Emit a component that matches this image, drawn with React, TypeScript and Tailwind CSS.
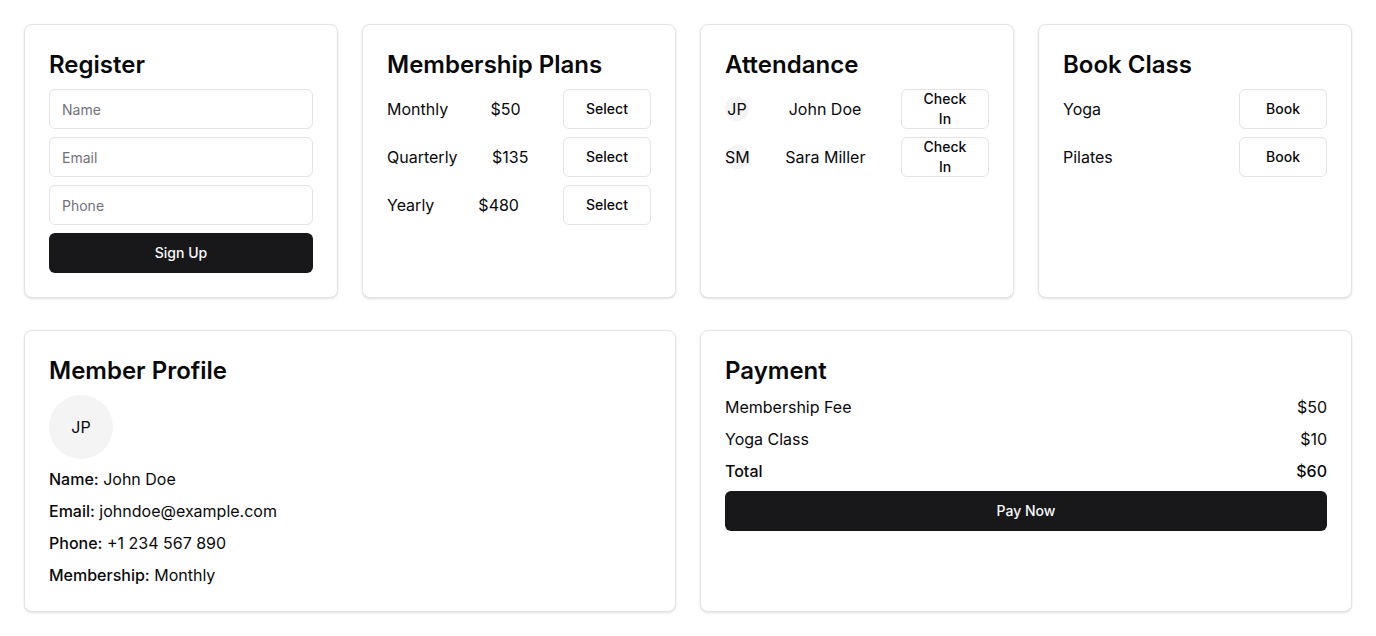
import React from "react";

const plans = [
  { name: "Monthly", price: "$50" },
  { name: "Quarterly", price: "$135" },
  { name: "Yearly", price: "$480" },
];

const members = [
  { initials: "JP", name: "John Doe" },
  { initials: "SM", name: "Sara Miller" },
];

const classes = ["Yoga", "Pilates"];

function Card({ title, className = "", children }: { title: string; className?: string; children: React.ReactNode }) {
  return (
    <div className={`rounded-lg border border-[#e4e4e7] bg-white p-6 shadow-sm ${className}`}>
      <h2 className="mb-2 text-2xl leading-8 font-semibold text-[#09090b]">{title}</h2>
      {children}
    </div>
  );
}

function OutlineButton({ children }: { children: React.ReactNode }) {
  return (
    <button className="flex h-10 w-22 shrink-0 items-center justify-center rounded-md border border-[#e4e4e7] bg-white px-4 text-sm leading-5 font-medium text-[#09090b]">
      {children}
    </button>
  );
}

export default function App() {
  return (
    <div className="min-h-screen bg-white p-6 font-['Inter',sans-serif] text-[#09090b]">
      <div className="grid grid-cols-4 gap-x-6 gap-y-8">
        <Card title="Register">
          <div className="flex flex-col gap-2">
            {["Name", "Email", "Phone"].map((p) => (
              <input
                key={p}
                placeholder={p}
                className="h-10 w-full rounded-md border border-[#e4e4e7] bg-white px-3 text-sm placeholder:text-[#71717a]"
              />
            ))}
            <button className="h-10 w-full rounded-md bg-[#18181b] text-sm font-medium text-[#fafafa]">Sign Up</button>
          </div>
        </Card>

        <Card title="Membership Plans">
          <div className="flex flex-col gap-2">
            {plans.map((p) => (
              <div key={p.name} className="flex items-center justify-between">
                <span>{p.name}</span>
                <span>{p.price}</span>
                <OutlineButton>Select</OutlineButton>
              </div>
            ))}
          </div>
        </Card>

        <Card title="Attendance">
          <div className="flex flex-col gap-2">
            {members.map((m) => (
              <div key={m.name} className="flex items-center justify-between">
                <span className="flex h-6 min-w-6 items-center justify-center rounded-full bg-[#f4f4f5]">{m.initials}</span>
                <span>{m.name}</span>
                <OutlineButton>Check In</OutlineButton>
              </div>
            ))}
          </div>
        </Card>

        <Card title="Book Class">
          <div className="flex flex-col gap-2">
            {classes.map((c) => (
              <div key={c} className="flex items-center justify-between">
                <span>{c}</span>
                <OutlineButton>Book</OutlineButton>
              </div>
            ))}
          </div>
        </Card>

        <Card title="Member Profile" className="col-span-2">
          <div className="flex flex-col gap-2">
            <div className="flex h-16 w-16 items-center justify-center rounded-full bg-[#f4f4f5]">JP</div>
            <p><span className="font-medium">Name:</span> John Doe</p>
            <p><span className="font-medium">Email:</span> johndoe@example.com</p>
            <p><span className="font-medium">Phone:</span> +1 234 567 890</p>
            <p><span className="font-medium">Membership:</span> Monthly</p>
          </div>
        </Card>

        <Card title="Payment" className="col-span-2">
          <div className="flex flex-col gap-2">
            <div className="flex justify-between">
              <span>Membership Fee</span>
              <span>$50</span>
            </div>
            <div className="flex justify-between">
              <span>Yoga Class</span>
              <span>$10</span>
            </div>
            <div className="flex justify-between font-medium">
              <span>Total</span>
              <span>$60</span>
            </div>
            <button className="h-10 w-full rounded-md bg-[#18181b] text-sm font-medium text-[#fafafa]">Pay Now</button>
          </div>
        </Card>
      </div>
    </div>
  );
}
